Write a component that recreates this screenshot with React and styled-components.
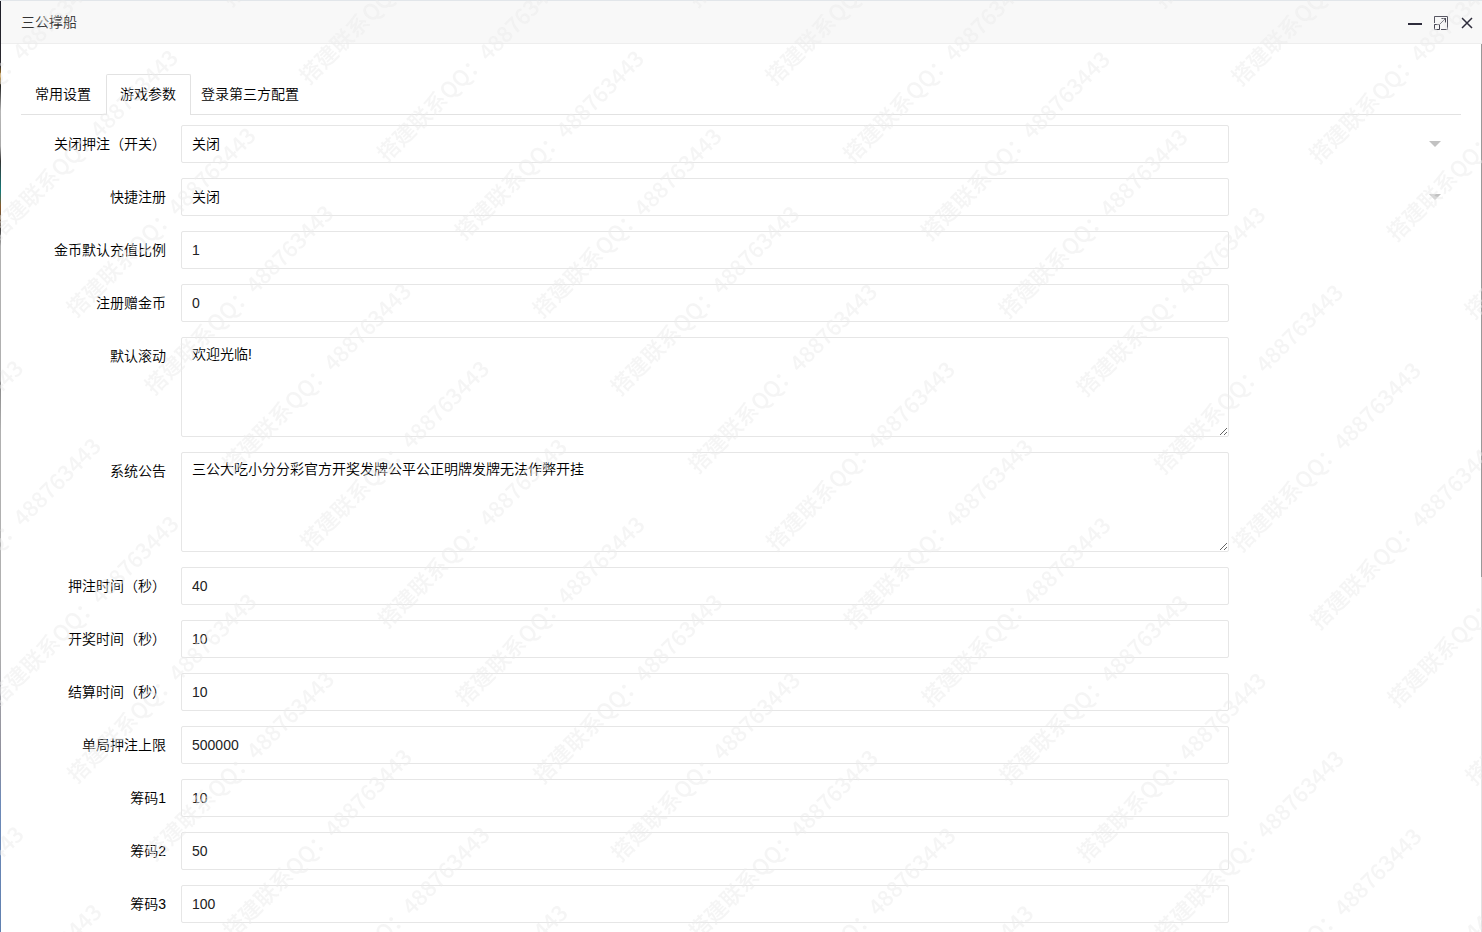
import React, { useState } from 'react'
import styled, { createGlobalStyle, css } from 'styled-components';

const GlobalStyle = createGlobalStyle`
  * {
    box-sizing: border-box;
  }

  body {
    margin: 0;
    color: #000;
    background-color: #fff;
    font: 350 14px/20px "Liberation Sans", "Noto Sans CJK SC", sans-serif;
  }

  button, input, select, textarea {
    font: inherit;
    color: inherit;
  }
`;

const Page = styled.div`
  display: grid;
  grid-template-columns: 1px 1fr;
  height: 100vh;
  overflow: hidden;
  border-top: 1px solid #e2e6ea;
`;

const Backdrop = styled.div`
  background: linear-gradient(
    #1c1c26 0, #2b2a30 65px, #c98a1c 75px, #222 85px, #b5b5b5 110px,
    #aaa 145px, #333 160px, #137a7a 190px, #8a5a2a 205px, #444 230px,
    #b0b0b0 245px, #b0b0b0 380px, #888 382px, #b0b0b0 430px, #b0b0b0 640px,
    #8d8d9a 760px, #6d8ab8 800px, #6080b0 100%
  );
`;

const Dialog = styled.main`
  display: flex;
  flex-direction: column;
  min-height: 0;
`;

const TitleBar = styled.header`
  flex: none;
  display: flex;
  align-items: center;
  justify-content: space-between;
  height: 43px;
  padding: 0 8px 0 20px;
  color: #333;
  background-color: #f8f8f8;
  border-bottom: 1px solid #eee;

  h1 {
    margin: 0;
    font-size: 14px;
    font-weight: inherit;
  }
`;

const WindowButtons = styled.div`
  display: flex;
  gap: 12px;
  padding-top: 2px;
`;

const IconButton = styled.button`
  display: flex;
  padding: 0;
  border: 0;
  background: none;
  cursor: pointer;

  svg {
    width: 14px;
    height: 14px;
    fill: none;
    stroke: #2e2d3c;
  }
`;

const Content = styled.div`
  flex: 1;
  min-height: 0;
  overflow: hidden;
  padding: 30px 20px 0;
  border-right: 1px solid #e2e2e2;
  border-image: linear-gradient(#999 533px, #e2e2e2 533px) 1;
`;

const Tabs = styled.nav`
  display: flex;
  height: 41px;
  border-bottom: 1px solid #e2e2e2;
`;

const Tab = styled.button`
  min-width: 85px;
  height: 41px;
  padding: 0 10px 2px 9px;
  border: 1px solid transparent;
  border-width: 1px 1px 0;
  border-radius: 2px 2px 0 0;
  background: none;
  cursor: pointer;

  ${props => props.$active && css`
    border-color: #e2e2e2;
    background-color: #fff;
  `}
`;

const Form = styled.form`
  padding: 10px;
`;

const Row = styled.div`
  display: grid;
  grid-template-columns: 150px 1fr;
  margin-bottom: 15px;
`;

const Label = styled.label`
  padding: 9px 15px;
  text-align: right;
`;

const FieldBox = styled.div`
  display: flex;
  align-items: center;
  justify-content: space-between;
`;

const control = css`
  display: block;
  width: 82.5%;
  height: 38px;
  padding: 0 10px;
  border: 1px solid #e6e6e6;
  border-radius: 2px;
  outline: 0;
  background-color: #fff;
`;

const Input = styled.input`
  ${control}
  color: #222;
`;

const Select = styled.select`
  ${control}
  appearance: none;
`;

const TextArea = styled.textarea`
  ${control}
  height: 100px;
  padding: 6px 10px;
  resize: vertical;
`;

const Caret = styled.span`
  margin-right: 10px;
  border: 6px solid transparent;
  border-top-color: #c2c2c2;
  border-bottom-width: 0;
`;

const WatermarkLayer = styled.div`
  position: fixed;
  inset: 0;
  z-index: 10;
  overflow: hidden;
  pointer-events: none;
  user-select: none;
`;

const WatermarkGrid = styled.div`
  display: grid;
  grid-template-columns: repeat(6, 329px);
  grid-auto-rows: 110px;
  align-items: center;
  width: 1974px;
  transform: rotate(-45deg) translate(-829px, -6px);
  transform-origin: 0 0;
  color: rgba(236, 236, 236, .5);
  font: 500 22px/24px "Noto Sans CJK SC", sans-serif;
  white-space: nowrap;
`;

const tabs = ['常用设置', '游戏参数', '登录第三方配置'];

const fields = [
  { name: 'betSwitch', label: '关闭押注（开关）', type: 'select', value: '关闭' },
  { name: 'quickSignup', label: '快捷注册', type: 'select', value: '关闭' },
  { name: 'rechargeRatio', label: '金币默认充值比例', value: '1' },
  { name: 'signupCoins', label: '注册赠金币', value: '0' },
  { name: 'marquee', label: '默认滚动', type: 'textarea', value: '欢迎光临!' },
  { name: 'notice', label: '系统公告', type: 'textarea', value: '三公大吃小分分彩官方开奖发牌公平公正明牌发牌无法作弊开挂' },
  { name: 'betSeconds', label: '押注时间（秒）', value: '40' },
  { name: 'drawSeconds', label: '开奖时间（秒）', value: '10' },
  { name: 'settleSeconds', label: '结算时间（秒）', value: '10' },
  { name: 'betLimit', label: '单局押注上限', value: '500000' },
  { name: 'chip1', label: '筹码1', value: '10' },
  { name: 'chip2', label: '筹码2', value: '50' },
  { name: 'chip3', label: '筹码3', value: '100' },
];

function FormControl({ field }) {
  const { name, type, value } = field;

  if (type === 'select') {
    return (
      <>
        <Select id={name} name={name} defaultValue={value}>
          <option>关闭</option>
        </Select>
        <Caret />
      </>
    );
  }

  if (type === 'textarea') {
    return <TextArea id={name} name={name} defaultValue={value} />;
  }

  return <Input id={name} name={name} defaultValue={value} />;
}

function Watermark() {
  return (
    <WatermarkLayer aria-hidden="true">
      <WatermarkGrid>
        {Array.from({ length: 102 }, (_, i) => (
          <span key={i}>搭建联系QQ：488763443</span>
        ))}
      </WatermarkGrid>
    </WatermarkLayer>
  );
}

function App() {
  const [activeTab, setActiveTab] = useState(1);

  return (
    <>
      <GlobalStyle />
      <Page>
        <Backdrop />
        <Dialog>
          <TitleBar>
            <h1>三公撑船</h1>
            <WindowButtons>
              <IconButton aria-label="最小化">
                <svg viewBox="0 0 14 14"><path d="M0 8H14" strokeWidth="2" /></svg>
              </IconButton>
              <IconButton aria-label="最大化">
                <svg viewBox="0 0 14 14">
                  <path d="M.5 7V.5H13.5V13.5H7" strokeWidth=".8" />
                  <path d="M.5 8.500H5.500V13.500H.5ZM6 8L11.500 2.500M7.500 2.500H11.500V6.500" strokeWidth=".9" />
                </svg>
              </IconButton>
              <IconButton aria-label="关闭">
                <svg viewBox="0 0 14 14"><path d="M2 2L12 12M12 2L2 12" strokeWidth="1.500" /></svg>
              </IconButton>
            </WindowButtons>
          </TitleBar>
          <Content>
            <Tabs>
              {tabs.map((tab, i) => (
                <Tab key={tab} type="button" $active={i === activeTab} onClick={() => setActiveTab(i)}>
                  {tab}
                </Tab>
              ))}
            </Tabs>
            <Form>
              {fields.map(field => (
                <Row key={field.name}>
                  <Label htmlFor={field.name}>{field.label}</Label>
                  <FieldBox>
                    <FormControl field={field} />
                  </FieldBox>
                </Row>
              ))}
            </Form>
          </Content>
        </Dialog>
      </Page>
      <Watermark />
    </>
  );
}

export default App
